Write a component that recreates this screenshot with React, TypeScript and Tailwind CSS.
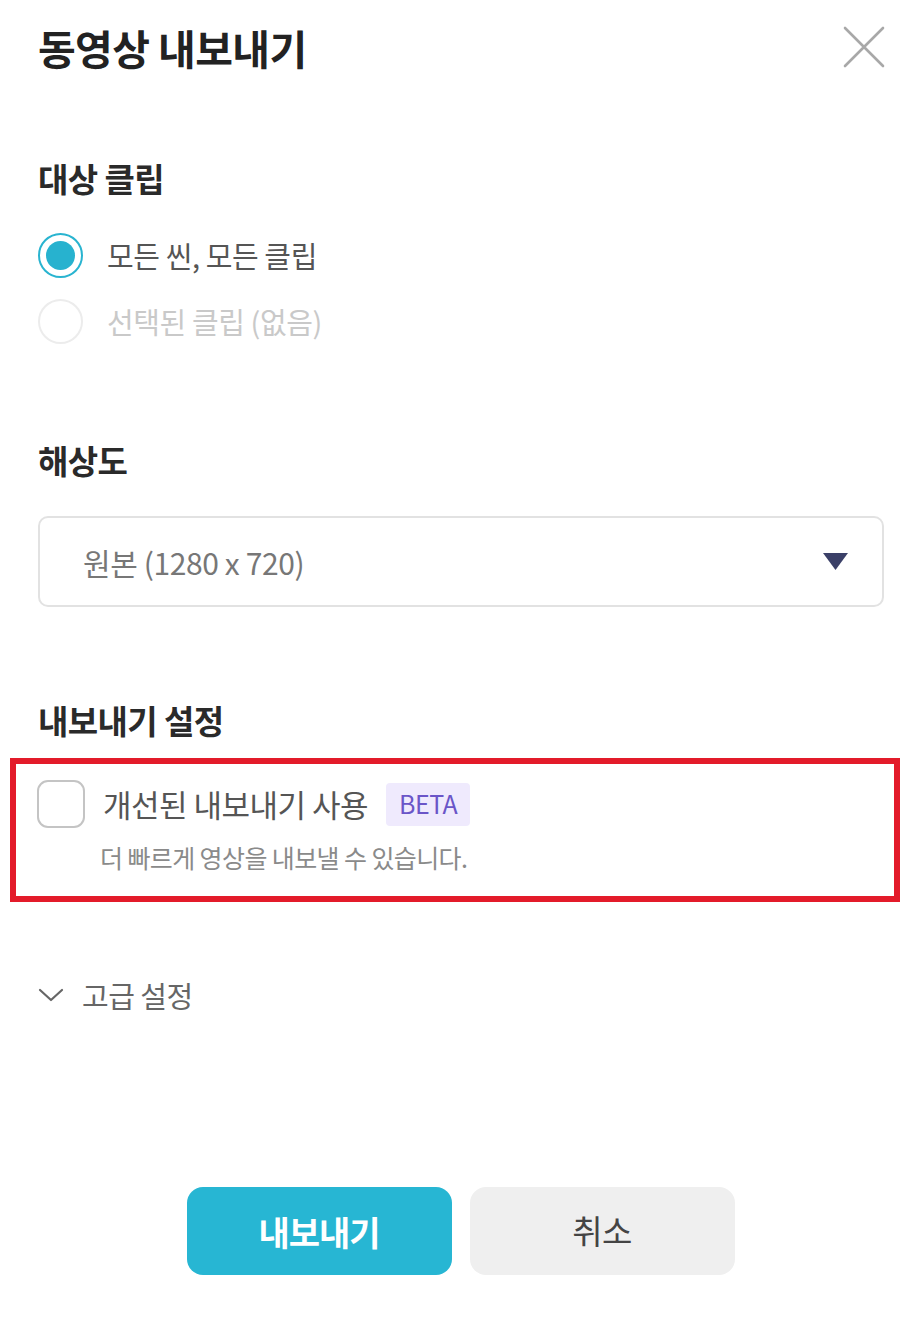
import { useState } from "react"

const font = { fontFamily: '"Noto Sans CJK KR", "Noto Sans", sans-serif' }

function CloseIcon() {
  return (
    <svg width="44" height="44" viewBox="0 0 44 44" fill="none">
      <path d="M3 3 L41 41 M41 3 L3 41" stroke="#a8a8a8" strokeWidth="2.6" strokeLinecap="round" />
    </svg>
  )
}

export default function App() {
  const [target, setTarget] = useState("all")
  const [improved, setImproved] = useState(false)

  return (
    <div className="w-[921px] h-[1324px] bg-white pl-[38px] pr-[37px] text-[#333] overflow-hidden" style={font}>
      {/* header */}
      <div className="h-[94px] flex items-center justify-between">
        <h1 className="text-[41px] font-bold leading-[48px] tracking-[-0.6px] text-[#222]">동영상 내보내기</h1>
        <button className="w-[44px] h-[44px] -mr-[2px]">
          <CloseIcon />
        </button>
      </div>

      {/* 대상 클립 */}
      <h2 className="mt-[64px] text-[33px] font-bold leading-[40px] tracking-[-0.6px] text-[#2a2a2a]">대상 클립</h2>
      <label className="mt-[34px] h-[46px] flex items-center gap-[24px]" onClick={() => setTarget("all")}>
        <span className="w-[45px] h-[45px] rounded-full border-[2px] border-[#29b4d0] flex items-center justify-center">
          {target === "all" && <span className="w-[29px] h-[29px] rounded-full bg-[#27b2cf]" />}
        </span>
        <span className="text-[29px] leading-[34px] tracking-[-0.4px] text-[#555]">모든 씬, 모든 클립</span>
      </label>
      <label className="mt-[20px] h-[46px] flex items-center gap-[24px]">
        <span className="w-[45px] h-[45px] rounded-full border-[2px] border-[#ececec]" />
        <span className="text-[29px] leading-[34px] tracking-[-0.4px] text-[#c9c9c9]">선택된 클립 (없음)</span>
      </label>

      {/* 해상도 */}
      <h2 className="mt-[96px] text-[33px] font-bold leading-[40px] tracking-[-0.6px] text-[#2a2a2a]">해상도</h2>
      <div className="mt-[36px] h-[91px] rounded-[10px] border-[2px] border-[#e2e2e2] flex items-center justify-between pl-[43px] pr-[34px]">
        <span className="text-[30px] leading-[36px] tracking-[-0.4px] text-[#777]">원본 (1280 x 720)</span>
        <svg width="25" height="17" viewBox="0 0 25 17">
          <path d="M0 0 H25 L12.5 17 Z" fill="#3b4068" />
        </svg>
      </div>

      {/* 내보내기 설정 */}
      <h2 className="mt-[93px] text-[33px] font-bold leading-[40px] tracking-[-0.6px] text-[#2a2a2a]">내보내기 설정</h2>
      <div className="mt-[18px] -ml-[28px] -mr-[16px] h-[144px] border-[6px] border-[#e31b2a] pl-[21px] pt-[16px]">
        <div className="flex items-center h-[48px]">
          <button
            onClick={() => setImproved(!improved)}
            className="w-[48px] h-[48px] rounded-[11px] border-[2px] border-[#c4c4c4] bg-white"
          />
          <span className="ml-[18px] text-[31px] leading-[36px] tracking-[-0.5px] text-[#555]">개선된 내보내기 사용</span>
          <span className="ml-[18px] h-[43px] px-[13px] flex items-center rounded-[4px] bg-[#efeafd] text-[25px] text-[#6a55c8] tracking-[-0.5px]">BETA</span>
        </div>
        <p className="mt-[14px] ml-[63px] text-[25px] leading-[30px] tracking-[-0.6px] text-[#8a8a8a]">더 빠르게 영상을 내보낼 수 있습니다.</p>
      </div>

      {/* 고급 설정 */}
      <div className="mt-[78px] h-[30px] flex items-center">
        <svg width="26" height="16" viewBox="0 0 26 16" fill="none">
          <path d="M2 3 L13 13 L24 3" stroke="#666" strokeWidth="2.2" strokeLinecap="round" strokeLinejoin="round" />
        </svg>
        <span className="ml-[18px] text-[29px] leading-[34px] tracking-[-0.5px] text-[#666]">고급 설정</span>
      </div>

      {/* buttons */}
      <div className="mt-[177px] flex justify-center gap-[18px] -ml-[38px] -mr-[37px]">
        <button className="w-[265px] h-[88px] rounded-[16px] bg-[#27b6d3] text-white text-[34px] font-bold tracking-[-1px]">내보내기</button>
        <button className="w-[265px] h-[88px] rounded-[16px] bg-[#efefef] text-[#444] text-[33px] tracking-[-0.5px]">취소</button>
      </div>
    </div>
  )
}
